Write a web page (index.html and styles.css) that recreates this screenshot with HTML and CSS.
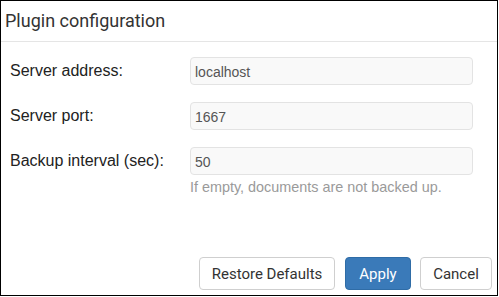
FILE: index.html
```html
<!DOCTYPE html>
<html>
<head>
<meta charset="utf-8">
<link rel="stylesheet" href="styles.css">
</head>
<body>
<div class="dialog">
  <div class="header">Plugin configuration</div>
  <div class="body">
    <div class="form">
      <label class="label">Server address:</label>
      <div class="field"><div class="input">localhost</div></div>
      <label class="label">Server port:</label>
      <div class="field"><div class="input">1667</div></div>
      <label class="label">Backup interval (sec):</label>
      <div class="field">
        <div class="input">50</div>
        <div class="help">If empty, documents are not backed up.</div>
      </div>
    </div>
  </div>
  <div class="footer">
    <button class="btn btn-restore">Restore Defaults</button>
    <button class="btn btn-primary btn-apply">Apply</button>
    <button class="btn btn-cancel">Cancel</button>
  </div>
</div>
</body>
</html>
```
FILE: styles.css
```css
html, body {
  margin: 0;
  padding: 0;
  background: #ffffff;
}
.dialog {
  box-sizing: border-box;
  width: 498px;
  height: 296px;
  border: 1px solid #000;
  display: flex;
  flex-direction: column;
  background: #fff;
}
.header {
  font-family: Roboto, sans-serif;
  font-size: 18px;
  line-height: 21px;
  color: #333;
  padding: 9px 4px 10px 4px;
  border-bottom: 1px solid #e5e5e5;
}
.body {
  flex: 1;
  padding: 15px 0 0 9px;
}
.form {
  display: grid;
  grid-template-columns: 180px 283px;
  row-gap: 17px;
  align-items: start;
}
.label {
  font-family: "Liberation Sans", Arial, sans-serif;
  font-size: 16px;
  line-height: 28px;
  color: #222;
}
.input {
  box-sizing: border-box;
  height: 28px;
  border: 1px solid #e3e3e3;
  border-radius: 4px;
  background: #f9f9f9;
  font-family: "Liberation Sans", Arial, sans-serif;
  font-size: 14px;
  line-height: 28px;
  color: #555;
  padding: 1px 4px 0 4px;
  display: flex;
  align-items: center;
}
.help {
  margin-top: 2px;
  font-family: "Liberation Sans", Arial, sans-serif;
  font-size: 14.4px;
  line-height: 20px;
  color: #9a9a9a;
}
.footer {
  display: flex;
  justify-content: flex-end;
  gap: 9px;
  padding: 0 5px 5px 0;
}
.btn {
  box-sizing: border-box;
  height: 33px;
  border: 1px solid #cfcfcf;
  border-radius: 4px;
  background: #fff;
  color: #333;
  font-family: Roboto, sans-serif;
  font-size: 15px;
  padding: 0;
  display: flex;
  align-items: center;
  justify-content: center;
}
.btn-restore { width: 136px; margin-right: 1px; }
.btn-apply { width: 66px; }
.btn-cancel { width: 72px; }
.btn-primary {
  background: #3a7ab9;
  border-color: #2f6ca6;
  color: #fff;
}
```
